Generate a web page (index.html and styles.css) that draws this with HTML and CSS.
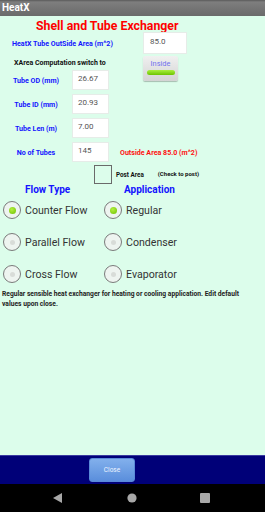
FILE: index.html
```html
<!DOCTYPE html>
<html>
<head>
<meta charset="utf-8">
<link rel="stylesheet" href="styles.css">
</head>
<body>
<div class="app">
  <header class="titlebar">HeatX</header>
  <main class="content">
    <h1 class="title">Shell and Tube Exchanger</h1>
    <div class="row-area">
      <span class="lbl lbl-area">HeatX Tube OutSide Area (m^2)</span>
      <div class="field field-wide">85.0</div>
    </div>
    <div class="switch-block">
      <div class="switch-left">
        <div class="xarea">XArea Computation switch to</div>
        <div class="frow first">
          <span class="lbl lbl-col">Tube OD (mm)</span>
          <div class="field">26.67</div>
        </div>
      </div>
      <button class="toggle">
        <span class="toggle-text">Inside</span>
        <span class="toggle-bar"></span>
      </button>
    </div>
    <div class="frow">
      <span class="lbl lbl-col">Tube ID (mm)</span>
      <div class="field">20.93</div>
    </div>
    <div class="frow">
      <span class="lbl lbl-col">Tube Len (m)</span>
      <div class="field">7.00</div>
    </div>
    <div class="frow">
      <span class="lbl lbl-col">No of Tubes</span>
      <div class="field">145</div>
      <span class="outside">Outside Area 85.0 (m^2)</span>
    </div>
    <div class="post-row">
      <span class="checkbox"></span>
      <span class="post">Post Area</span>
      <span class="hint">(Check to post)</span>
    </div>
    <div class="heads">
      <span class="head head-flow">Flow Type</span>
      <span class="head head-app">Application</span>
    </div>
    <div class="radios">
      <div class="radio on"><span class="dot"></span>Counter Flow</div>
      <div class="radio on"><span class="dot"></span>Regular</div>
      <div class="radio"><span class="dot"></span>Parallel Flow</div>
      <div class="radio"><span class="dot"></span>Condenser</div>
      <div class="radio"><span class="dot"></span>Cross Flow</div>
      <div class="radio"><span class="dot"></span>Evaporator</div>
    </div>
    <p class="desc">Regular sensible heat exchanger for heating or cooling application. Edit default values upon close.</p>
  </main>
  <div class="bottombar">
    <button class="close">Close</button>
  </div>
  <nav class="navbar">
    <svg class="nav-ico" width="12" height="12" viewBox="0 0 12 12"><polygon points="10,1 10,11 1,6" fill="#a8a8a8"/></svg>
    <svg class="nav-ico" width="12" height="12" viewBox="0 0 12 12"><circle cx="6" cy="6" r="4.6" fill="#a8a8a8"/></svg>
    <svg class="nav-ico" width="12" height="12" viewBox="0 0 12 12"><rect x="1" y="1" width="10" height="10" rx="1" fill="#a8a8a8"/></svg>
  </nav>
</div>
</body>
</html>
```

FILE: styles.css
```css
* { box-sizing: border-box; margin: 0; padding: 0; }
html, body { width: 265px; height: 512px; overflow: hidden; }
body { font-family: Roboto, "Liberation Sans", Arial, sans-serif; background: #000; }
.app { display: flex; flex-direction: column; height: 512px; }
.titlebar {
  height: 16px;
  background: linear-gradient(#5a5a5a 0, #7e7e7e 2px, #6a6a6a 100%);
  color: #fff;
  font-weight: bold;
  font-size: 10px;
  line-height: 16px;
  padding-left: 2px;
}
.content {
  flex: 1;
  background: #dcfdeb;
  display: flex;
  flex-direction: column;
}
.title {
  color: #ff0000;
  font-size: 12.3px;
  font-weight: bold;
  line-height: 16px;
  margin-top: 2px;
  padding-left: 36px;
  white-space: nowrap;
}
.lbl { color: #1414ff; font-weight: bold; font-size: 7.1px; white-space: nowrap; }
.row-area {
  display: flex;
  align-items: center;
  margin-top: -2px;
  height: 22px;
}
.lbl-area { padding-left: 12px; width: 143px; }
.field {
  background: #fff;
  border: 1px solid #e6ece8;
  color: #555;
  font-size: 8px;
  width: 37px;
  height: 20px;
  line-height: 16px;
  padding-left: 5px;
}
.field-wide { width: 44px; height: 22px; line-height: 18px; padding-left: 6px; }
.switch-block { display: flex; margin-top: 2px; }
.switch-left { width: 143px; }
.xarea {
  font-size: 7px;
  font-weight: bold;
  color: #111;
  padding-left: 14px;
  height: 14px;
  line-height: 14px;
  white-space: nowrap;
}
.frow { display: flex; align-items: center; height: 20px; margin-top: 4px; }
.frow.first { margin-top: 0; }
.lbl-col { width: 72px; text-align: center; }
.outside {
  color: #ff1010;
  font-weight: bold;
  font-size: 7.1px;
  margin-left: 11px;
  white-space: nowrap;
}
.toggle {
  width: 35px;
  height: 25px;
  border: none;
  border-radius: 2px;
  background: linear-gradient(#f0f0f0, #d4d4d4);
  box-shadow: 0 1px 1px rgba(0,0,0,0.25);
  display: flex;
  flex-direction: column;
  align-items: center;
  padding-top: 3px;
  font-family: inherit;
}
.toggle-text { color: #7272ee; font-size: 7.4px; line-height: 9px; }
.toggle-bar {
  margin-top: 2px;
  width: 28px;
  height: 5px;
  border-radius: 3px;
  background: linear-gradient(#aaf040, #6cc400);
}
.post-row { display: flex; align-items: center; height: 20px; margin-top: 2px; }
.checkbox {
  width: 18px;
  height: 19px;
  border: 1.5px solid #6a6a6a;
  margin-left: 94px;
}
.post { font-size: 6.3px; font-weight: bold; color: #111; margin-left: 4px; margin-top: 2px; }
.hint { font-size: 6px; font-weight: bold; color: #111; margin-left: 14px; margin-top: -1px; }
.heads { display: flex; height: 12px; line-height: 12px; }
.head { color: #1414ff; font-weight: bold; font-size: 10px; }
.head-flow { margin-left: 25px; width: 99px; }
.radios {
  display: grid;
  grid-template-columns: 101px 1fr;
  grid-auto-rows: 32px;
  margin-top: 4px;
  padding-left: 3px;
}
.radio {
  display: flex;
  align-items: center;
  font-size: 10.6px;
  color: #333;
  height: 20px;
}
.radio .dot {
  width: 18px;
  height: 18px;
  border-radius: 50%;
  border: 1.2px solid #7a7a7a;
  background: #eef4f0;
  margin-right: 4px;
  position: relative;
  flex: none;
}
.radio .dot::after {
  content: "";
  position: absolute;
  left: 50%; top: 50%;
  width: 5px; height: 5px;
  margin: -2.5px 0 0 -2.5px;
  border-radius: 50%;
  background: #d8dcd8;
}
.radio.on .dot::after {
  width: 7px; height: 7px;
  margin: -3.5px 0 0 -3.5px;
  background: radial-gradient(circle at 40% 35%, #b4f040, #6cc000);
}
.desc {
  font-size: 6.7px;
  font-weight: bold;
  color: #222;
  line-height: 9.5px;
  padding: 0 16px 0 2px;
  margin-top: -6px;
}
.bottombar {
  height: 29px;
  background: #000078;
  border-top: 1px solid #3a3aa0;
  display: flex;
  align-items: center;
  padding-left: 89px;
}
.close {
  width: 46px;
  height: 24px;
  border: 1px solid #5a8ad8;
  border-radius: 3px;
  background: linear-gradient(#82b0ec, #5a8edc);
  color: #eef4ff;
  font-size: 6.5px;
  font-family: inherit;
}
.navbar {
  height: 28px;
  background: #000;
  display: flex;
  align-items: center;
  justify-content: space-between;
  padding: 0 54px 0 52px;
}
```
